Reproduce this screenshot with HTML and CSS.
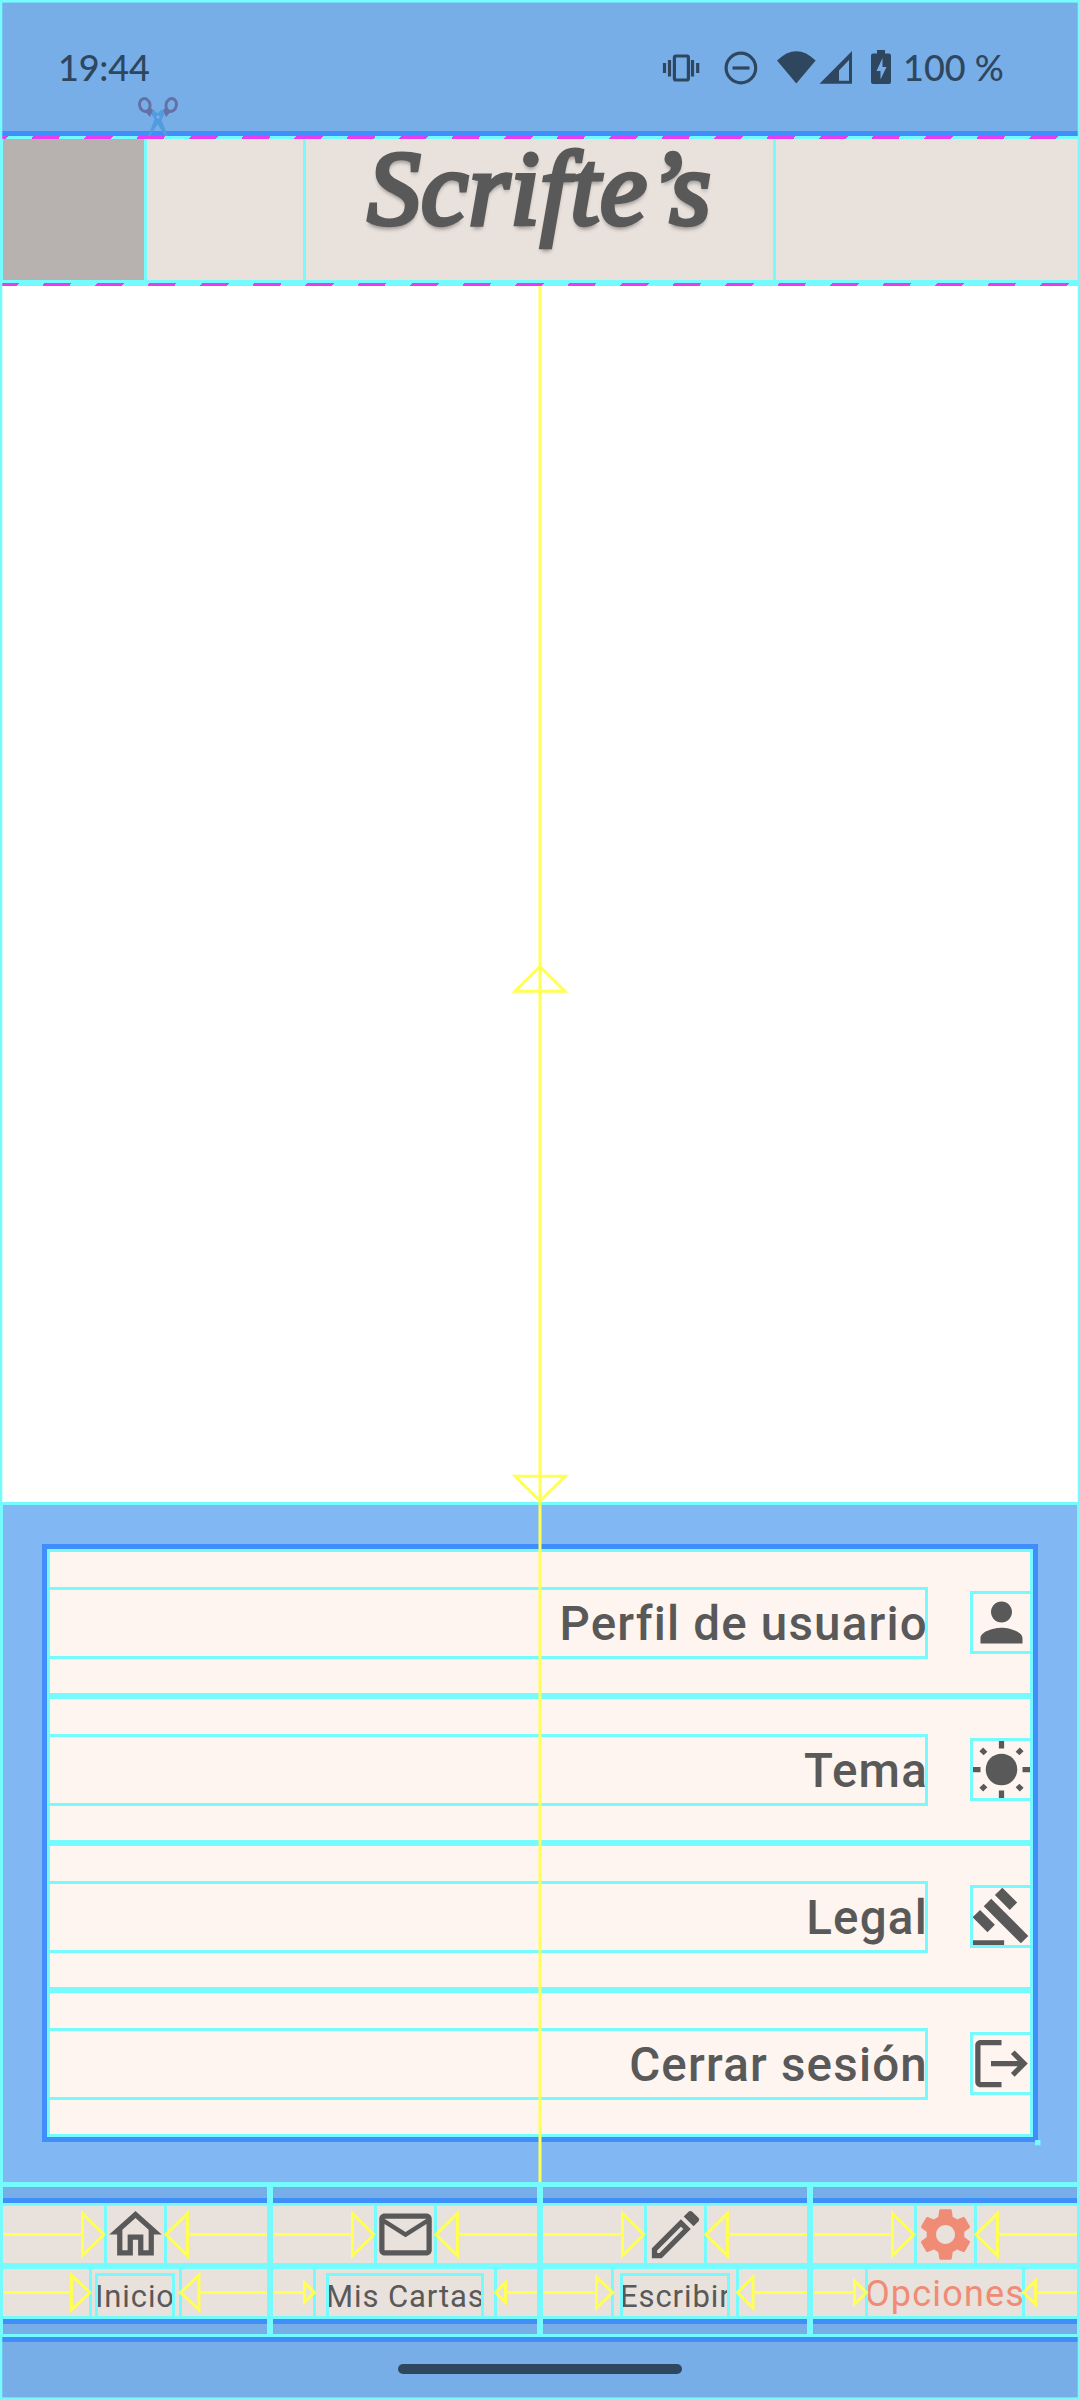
FILE: index.html
```html
<!DOCTYPE html>
<html lang="es">
<head>
<meta charset="utf-8">
<title>Scrifte’s</title>
<link rel="stylesheet" href="styles.css">
</head>
<body>
<div class="screen">
  <header class="status">
    <span class="clock">19:44</span>
    <div class="status-right">
      <svg class="status-icons" viewBox="662 48 232 40" width="232" height="40">
        <g fill="none" stroke="currentColor" stroke-width="3.2">
          <rect x="674.4" y="56" width="14" height="24" rx="1.5"/>
          <path d="M669.5 60v16.500M664.500 63v10M692.500 60v16.500M697.700 63v10"/>
          <circle cx="740.900" cy="68" r="14.800"/>
          <path d="M732.500 68h17"/>
        </g>
        <g fill="currentColor">
          <path d="M777 60.500Q796.300 42 815.700 60.500L796.300 83.500z"/>
          <path fill-rule="evenodd" d="M819.500 83.700L852 51v32.700zM839 70.500V80.700h10V60z"/>
          <path fill-rule="evenodd" d="M877 50h8v3.500h4a2 2 0 0 1 2 2V82a2 2 0 0 1-2 2h-16a2 2 0 0 1-2-2V55.500a2 2 0 0 1 2-2h4zM882.500 58L876.500 71h4v8.500L886.500 67h-4z"/>
        </g>
      </svg>
      <span class="battery">100 %</span>
    </div>
  </header>

  <div class="app-bar">
    <div class="leading box"></div>
    <div class="title-box box"><h1 class="title">Scrifte’s</h1></div>
  </div>

  <main class="empty"></main>

  <section class="panel box">
    <div class="card">
      <div class="option box"><span class="option-text box">Perfil de usuario</span>
        <span class="icon box"><svg viewBox="0 0 24 24"><path d="M12 12c2.210 0 4-1.790 4-4s-1.790-4-4-4-4 1.790-4 4 1.790 4 4 4zm0 2c-2.670 0-8 1.340-8 4v2h16v-2c0-2.660-5.330-4-8-4z"/></svg></span></div>
      <div class="option box"><span class="option-text box">Tema</span>
        <span class="icon box"><svg viewBox="0 0 24 24"><circle cx="12" cy="12" r="6"/><path fill="none" stroke="currentColor" stroke-width="2" d="M12 1v3M12 20v3M1 12h3M20 12h3M4.300 4.300l1.600 1.600M18.100 18.100l1.600 1.600M19.700 4.300l-1.600 1.600M5.900 18.100l-1.600 1.600"/></svg></span></div>
      <div class="option box"><span class="option-text box">Legal</span>
        <span class="icon box"><svg viewBox="0 0 24 24"><path d="M1 21h12v2H1zM5.245 8.070l2.830-2.827 14.140 14.142-2.828 2.828zM12.317 1l5.657 5.656-2.830 2.830-5.654-5.660zM3.825 9.485l5.657 5.657-2.828 2.828-5.657-5.657z"/></svg></span></div>
      <div class="option box"><span class="option-text box">Cerrar sesión</span>
        <span class="icon box"><svg viewBox="0 0 24 24"><path d="M17 7l-1.410 1.410L18.170 11H8v2h10.170l-2.580 2.580L17 17l5-5zM4 5h8V3H4c-1.100 0-2 .9-2 2v14c0 1.100.9 2 2 2h8v-2H4V5z"/></svg></span></div>
    </div>
  </section>

  <nav class="tabs">
    <a class="tab box">
      <span class="tab-body">
        <span class="tab-row box"><span class="icon box"><svg viewBox="0 0 24 24"><path d="M12 5.690l5 4.500V18h-2v-6H9v6H7v-7.810l5-4.500M12 3L2 12h3v8h6v-6h2v6h6v-8h3L12 3z"/></svg></span></span>
        <span class="label-row box"><span class="label-outer inicio box"><span class="label box">Inicio</span></span></span>
      </span>
    </a>
    <a class="tab box">
      <span class="tab-body">
        <span class="tab-row box"><span class="icon box"><svg viewBox="0 0 24 24"><path d="M22 6c0-1.100-.9-2-2-2H4c-1.100 0-2 .9-2 2v12c0 1.100.9 2 2 2h16c1.100 0 2-.9 2-2V6zm-2 0l-8 5-8-5h16zm0 12H4V8l8 5 8-5v10z"/></svg></span></span>
        <span class="label-row box"><span class="label-outer cartas box"><span class="label box">Mis Cartas</span></span></span>
      </span>
    </a>
    <a class="tab box">
      <span class="tab-body">
        <span class="tab-row box"><span class="icon box"><svg viewBox="0 0 24 24"><path d="M14.060 9.020l.92.92L5.920 19H5v-.92l9.060-9.060M17.660 3c-.25 0-.51.1-.7.29l-1.830 1.830 3.750 3.750 1.830-1.830c.39-.39.39-1.020 0-1.410l-2.340-2.340c-.2-.2-.45-.29-.71-.29zm-3.600 3.190L3 17.250V21h3.750L17.810 9.940l-3.750-3.750z"/></svg></span></span>
        <span class="label-row box"><span class="label-outer escribir box"><span class="label box">Escribir</span></span></span>
      </span>
    </a>
    <a class="tab active box">
      <span class="tab-body">
        <span class="tab-row box"><span class="icon box"><svg viewBox="0 0 24 24"><path d="M19.140 12.940c.04-.3.06-.61.06-.94 0-.32-.02-.64-.07-.94l2.030-1.580c.18-.14.23-.41.12-.61l-1.920-3.320c-.12-.22-.37-.29-.59-.22l-2.390.96c-.5-.38-1.030-.7-1.620-.94l-.36-2.540c-.04-.24-.24-.41-.48-.41h-3.840c-.24 0-.43.17-.47.41l-.36 2.540c-.59.24-1.130.57-1.620.94l-2.390-.96c-.22-.08-.47 0-.59.22L2.740 8.870c-.12.21-.08.47.12.61l2.030 1.580c-.05.3-.09.63-.09.94s.02.64.07.94l-2.030 1.580c-.18.14-.23.41-.12.61l1.920 3.320c.12.22.37.29.59.22l2.390-.96c.5.38 1.030.7 1.620.94l.36 2.540c.05.24.24.41.48.41h3.840c.24 0 .44-.17.47-.41l.36-2.540c.59-.24 1.130-.56 1.620-.94l2.390.96c.22.08.47 0 .59-.22l1.920-3.320c.12-.22.07-.47-.12-.61l-2.010-1.580zM12 15.600c-1.980 0-3.600-1.620-3.600-3.600s1.620-3.600 3.600-3.600 3.600 1.620 3.600 3.600-1.620 3.600-3.600 3.600z"/></svg></span></span>
        <span class="label-row box"><span class="label-outer opciones box"><span class="label">Opciones</span></span></span>
      </span>
    </a>
  </nav>

  <footer class="gesture"><span class="handle"></span></footer>

  <!-- alignment arrows, clip marker and frame drawn over the widgets -->
  <svg class="guides" viewBox="0 0 1080 2400" width="1080" height="2400">
    <defs>
      <g id="pair">
        <path d="M3 31.600H82.500M104 31.600L82.500 10.500V52.700zM267 31.600H187.500M166 31.600L187.500 10.500V52.700z"/>
      </g>
      <clipPath id="cut"><rect x="130" y="90" width="60" height="46"/></clipPath>
    </defs>
    <g class="arrow">
      <path d="M540 286V2182"/>
      <path d="M540 966.500L515 991.300H565z"/>
      <path d="M540 1501L515 1476.200H565z"/>
      <use href="#pair" x="0" y="2203"/><use href="#pair" x="270" y="2203"/>
      <use href="#pair" x="540" y="2203"/><use href="#pair" x="810" y="2203"/>
      <path d="M3 2292.500H71M90 2292.500L71.500 2275.500V2309.500zM267 2292.500H199M180.500 2292.500L199 2275.500V2309.500z"/>
      <path d="M273 2292.500H304M314.500 2292.500L304.500 2282.800V2302.200zM537 2292.500H506M495.500 2292.500L505.500 2282.800V2302.200z"/>
      <path d="M543 2292.500H596M612.500 2292.500L596.500 2277V2308zM807 2292.500H753M737.500 2292.500L753 2277V2308z"/>
      <path d="M813 2292.500H854M866.500 2292.500L854.500 2281V2304zM1077 2292.500H1036M1023.500 2292.500L1035.500 2281V2304z"/>
    </g>
    <g clip-path="url(#cut)">
      <path fill="#539bdf" d="M147.500 137.500l7-18-4-7 3-3 4 4 4-4 3.500 3-3.500 7.500 7 17.500h-2.500l-8.500-13.500-8 13.500z"/>
      <g fill="none" stroke="#6471a5" stroke-width="3">
        <ellipse cx="144.800" cy="105" rx="5.200" ry="6.500" transform="rotate(-15 144.800 105)"/>
        <ellipse cx="171.200" cy="105" rx="5.200" ry="6.500" transform="rotate(15 171.200 105)"/>
      </g>
      <path fill="#6471a5" d="M149.500 107l3.500 3-3 7-4-4.500zM166.500 107l-3.500 3 3 7 4-4.500z"/>
      <circle cx="158" cy="117" r="1.500" fill="#78b8ef"/>
    </g>
    <rect class="frame" x="1" y="1.300" width="1078" height="2397.400"/>
    <rect x="1035" y="2140" width="5.500" height="5.300" fill="#75fbfd"/>
  </svg>
</div>
</body>
</html>
```
FILE: styles.css
```css
:root {
  --cyan: #75fbfd;
  --edge: #3f8ef9;
  --ink: #595959;
  --bar: #e9e1dc;
  --pad: #78aee8;
}

* { box-sizing: border-box; }

body {
  margin: 0;
  font-family: Roboto, "Liberation Sans", sans-serif;
  color: var(--ink);
}

.screen {
  position: relative;
  width: 1080px;
  height: 2400px;
  overflow: hidden;
  display: flex;
  flex-direction: column;
  background: #fff;
}

.box {
  outline: 3px solid var(--cyan);
  outline-offset: -3px;
}

/* status bar */
.status {
  height: 136px;
  display: flex;
  justify-content: space-between;
  padding: 0 76px 0 58px;
  background: var(--pad);
  border-bottom: 5px solid var(--edge);
  color: #2f475e;
  font: 500 36px/44px Lato, sans-serif;
}
.clock { padding-top: 45px; letter-spacing: -0.2px; }
.status-right { display: flex; padding-top: 46px; }
.status-icons { display: block; margin: 2px 9px 0 0; }
.battery { white-space: nowrap; width: 101px; margin-top: -1px; }

/* app bar */
.app-bar {
  position: relative;
  height: 150px;
  display: flex;
  padding-bottom: 3px;
  background: linear-gradient(var(--cyan) 3px, var(--bar) 3px 144px, var(--cyan) 144px);
}
.app-bar::before,
.app-bar::after {
  content: "";
  position: absolute;
  right: 0;
  height: 3px;
  transform: skewX(-35deg);
  background: repeating-linear-gradient(90deg, #e83cf2 0 27px, transparent 27px 52.5px);
}
.app-bar::before { top: 0; left: -20.200px; }
.app-bar::after { bottom: 0; left: -9.100px; }
.leading { width: 147px; background: #b7b2af; }
.title-box {
  width: 473px;
  margin-left: 156px;
  display: flex;
  justify-content: center;
}
.title {
  margin: 0;
  font: italic 400 106px/106px "Liberation Serif", serif;
  letter-spacing: 0.500px;
  white-space: nowrap;
  -webkit-text-stroke: 4.500px var(--ink);
  text-shadow: 0 4px 4px rgba(0, 0, 0, 0.4);
}

.empty { height: 1216px; }

/* options panel */
.panel {
  height: 683px;
  margin-bottom: -1px;
  padding: 42px;
  background: #81b7f2;
}
.card {
  border: 5px solid var(--edge);
  background: #fef5f0;
  height: 598px;
  display: grid;
  grid-template-rows: repeat(4, 147px);
}
.option {
  display: flex;
  align-items: center;
  gap: 42px;
}
.option-text {
  flex: 1;
  height: 72px;
  font-size: 47.500px;
  font-weight: 500;
  line-height: 74px;
  letter-spacing: 1.200px;
  text-align: right;
  white-space: nowrap;
}
.icon { display: block; width: 63px; height: 63px; }
.icon svg { display: block; width: 63px; height: 63px; fill: currentColor; }

/* bottom tabs */
.tabs { display: grid; grid-template-columns: repeat(4, 270px); }
.tab {
  height: 153px;
  padding: 14px 0 13px;
  background: var(--pad);
}
.tab-body {
  display: block;
  background: var(--bar);
  border-top: 5px solid var(--edge);
  border-bottom: 5px solid var(--edge);
}
.tab-row { display: flex; justify-content: center; height: 63px; }
.label-row { display: flex; justify-content: center; height: 53px; }
.label-outer { display: flex; justify-content: center; padding-top: 7px; }
.label {
  display: block;
  font-size: 31px;
  line-height: 47px;
  letter-spacing: 0.900px;
  white-space: nowrap;
}
.inicio { width: 93px; }
.inicio .label { width: 80px; }
.cartas { width: 184px; }
.cartas .label { width: 158px; }
.escribir { width: 128px; }
.escribir .label { width: 110px; }
.opciones { width: 160px; padding-top: 0; }
.opciones .label { font-size: 36px; line-height: 57px; letter-spacing: 1.200px; }
.active { color: #f08b76; }

.gesture {
  height: 63px;
  padding-top: 22px;
  background: var(--pad);
  border-top: 5px solid var(--edge);
}
.handle {
  display: block;
  width: 284px;
  height: 10px;
  margin: 0 auto;
  border-radius: 5px;
  background: #2f475e;
}

.guides { position: absolute; inset: 0; pointer-events: none; }
.arrow { fill: none; stroke: #ffff54; stroke-width: 3; }
.frame { fill: none; stroke: var(--cyan); stroke-width: 2.600; }
```
